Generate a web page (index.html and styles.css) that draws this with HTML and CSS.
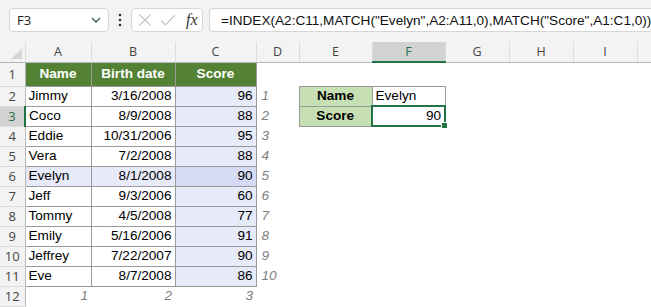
FILE: index.html
```html
<!DOCTYPE html>
<html lang="en">
<head>
    <meta charset="UTF-8">
    <title>INDEX MATCH</title>
    <link rel="stylesheet" href="styles.css">
</head>
<body>
    <!-- Barra de fórmulas -->
    <div class="formula-bar">
        <div class="name-box">
            <span>F3</span>
            <svg width="12" height="8" viewBox="0 0 12 8"><path d="M2 2 L6 6 L10 2" fill="none" stroke="#3b5a3f" stroke-width="1.3"/></svg>
        </div>
        <div class="dots">
            <svg width="4" height="14" viewBox="0 0 4 14"><circle cx="2" cy="2" r="1.3" fill="#333"/><circle cx="2" cy="7" r="1.3" fill="#333"/><circle cx="2" cy="12" r="1.3" fill="#333"/></svg>
        </div>
        <div class="fx-box">
            <svg width="14" height="14" viewBox="0 0 14 14"><path d="M1.5 1.5 L12.5 12.5 M12.5 1.5 L1.5 12.5" stroke="#c4c4c4" stroke-width="1.1" fill="none"/></svg>
            <svg width="16" height="14" viewBox="0 0 16 14"><path d="M1 7.5 L5.5 12 L15 2" stroke="#c4c4c4" stroke-width="1.1" fill="none"/></svg>
            <span class="fx">fx</span>
        </div>
        <div class="formula">=INDEX(A2:C11,MATCH("Evelyn",A2:A11,0),MATCH("Score",A1:C1,0))</div>
    </div>

    <!-- Hoja -->
    <table class="sheet">
        <colgroup>
            <col class="c-rh"><col class="c-a"><col class="c-b"><col class="c-c"><col class="c-d">
            <col class="c-e"><col class="c-f"><col class="c-g"><col class="c-h"><col class="c-i"><col class="c-j">
        </colgroup>
        <tr class="col-heads">
            <th class="corner"><span class="tri"></span></th>
            <th>A</th><th>B</th><th>C</th><th>D</th><th>E</th>
            <th class="sel">F</th><th>G</th><th>H</th><th>I</th><th></th>
        </tr>
        <tr class="first">
            <th class="rh">1</th>
            <td class="t head">Name</td><td class="t head">Birth date</td><td class="t head">Score</td>
            <td></td><td></td><td></td><td></td><td></td><td></td><td></td>
        </tr>
        <tr>
            <th class="rh">2</th>
            <td class="t">Jimmy</td><td class="t num">3/16/2008</td><td class="t num sc">96</td>
            <td class="idx">1</td><td class="lab">Name</td><td class="val">Evelyn</td><td></td><td></td><td></td><td></td>
        </tr>
        <tr>
            <th class="rh rh-sel">3</th>
            <td class="t">Coco</td><td class="t num">8/9/2008</td><td class="t num sc">88</td>
            <td class="idx">2</td><td class="lab">Score</td><td class="val num active">90<span class="handle"></span></td><td></td><td></td><td></td><td></td>
        </tr>
        <tr>
            <th class="rh">4</th>
            <td class="t">Eddie</td><td class="t num">10/31/2006</td><td class="t num sc">95</td>
            <td class="idx">3</td><td></td><td></td><td></td><td></td><td></td><td></td>
        </tr>
        <tr>
            <th class="rh">5</th>
            <td class="t">Vera</td><td class="t num">7/2/2008</td><td class="t num sc">88</td>
            <td class="idx">4</td><td></td><td></td><td></td><td></td><td></td><td></td>
        </tr>
        <tr>
            <th class="rh">6</th>
            <td class="t hl">Evelyn</td><td class="t num hl">8/1/2008</td><td class="t num hit">90</td>
            <td class="idx">5</td><td></td><td></td><td></td><td></td><td></td><td></td>
        </tr>
        <tr>
            <th class="rh">7</th>
            <td class="t">Jeff</td><td class="t num">9/3/2006</td><td class="t num sc">60</td>
            <td class="idx">6</td><td></td><td></td><td></td><td></td><td></td><td></td>
        </tr>
        <tr>
            <th class="rh">8</th>
            <td class="t">Tommy</td><td class="t num">4/5/2008</td><td class="t num sc">77</td>
            <td class="idx">7</td><td></td><td></td><td></td><td></td><td></td><td></td>
        </tr>
        <tr>
            <th class="rh">9</th>
            <td class="t">Emily</td><td class="t num">5/16/2006</td><td class="t num sc">91</td>
            <td class="idx">8</td><td></td><td></td><td></td><td></td><td></td><td></td>
        </tr>
        <tr>
            <th class="rh">10</th>
            <td class="t">Jeffrey</td><td class="t num">7/22/2007</td><td class="t num sc">90</td>
            <td class="idx">9</td><td></td><td></td><td></td><td></td><td></td><td></td>
        </tr>
        <tr>
            <th class="rh">11</th>
            <td class="t">Eve</td><td class="t num">8/7/2008</td><td class="t num sc">86</td>
            <td class="idx">10</td><td></td><td></td><td></td><td></td><td></td><td></td>
        </tr>
        <tr>
            <th class="rh">12</th>
            <td class="num idx">1</td><td class="num idx">2</td><td class="num idx">3</td>
            <td></td><td></td><td></td><td></td><td></td><td></td><td></td>
        </tr>
        <tr class="last">
            <th class="rh"></th>
            <td></td><td></td><td></td><td></td><td></td><td></td><td></td><td></td><td></td><td></td>
        </tr>
    </table>
</body>
</html>
```

FILE: styles.css
```css
body {
    margin: 0;
    background-color: #ffffff;
    font-family: "Liberation Sans", Arial, sans-serif;
    overflow: hidden;
}

/* Barra de fórmulas */
.formula-bar {
    display: flex;
    align-items: center;
    height: 42px;
    box-sizing: border-box;
    padding: 0 0 2px 9px;
    background-color: #f3f3f3;
    overflow: hidden;
}

.name-box, .fx-box, .formula {
    height: 24px;
    box-sizing: border-box;
    background-color: #ffffff;
    border: 1px solid #d6d6d6;
    border-radius: 4px;
    display: flex;
    align-items: center;
}

.name-box {
    width: 100px;
    padding: 0 6px 0 7px;
    justify-content: space-between;
    font-family: "Open Sans", sans-serif;
    font-size: 13px;
    color: #222;
}

.dots {
    width: 22px;
    display: flex;
    justify-content: center;
}

.fx-box {
    width: 72px;
    padding: 0 4px 0 6px;
    gap: 8px;
}

.fx {
    font-family: "Liberation Serif", serif;
    font-style: italic;
    font-size: 16px;
    color: #333;
    margin-left: 2px;
}

.formula {
    margin-left: 6px;
    flex: 1;
    border-right: none;
    border-radius: 4px 0 0 4px;
    padding-left: 11px;
    font-size: 13.6px;
    color: #111;
    white-space: nowrap;
    overflow: hidden;
}

/* Hoja */
.sheet {
    border-collapse: collapse;
    table-layout: fixed;
    width: 651px;
}

.c-rh { width: 25px; }
.c-a { width: 66px; }
.c-b { width: 84px; }
.c-c { width: 81px; }
.c-d { width: 43px; }
.c-e { width: 73px; }
.c-f { width: 73px; }
.c-g, .c-h, .c-i { width: 64px; }
.c-j { width: 14px; }

.col-heads th {
    height: 16px;
    padding: 0;
    background-color: #f3f3f3;
    border-left: 1px solid #dcdcdc;
    border-bottom: 1px solid #b7b7b7;
    font-family: "Open Sans", sans-serif;
    font-weight: normal;
    font-size: 12.5px;
    color: #444;
    line-height: 16px;
}

.col-heads th.corner {
    position: relative;
    border-left: none;
}

.tri {
    position: absolute;
    right: 3px;
    bottom: 3px;
    width: 0;
    height: 0;
    border-left: 11px solid transparent;
    border-bottom: 11px solid #d6d6d6;
}

.col-heads th.sel {
    background-color: #d2d2d2;
    color: #217346;
    border-bottom: 2px solid #217346;
}

tr {
    height: 20px;
}

tr.first {
    height: 24px;
}

tr.last {
    height: 3px;
}

.rh {
    padding: 0;
    background-color: #f3f3f3;
    border-right: 1px solid #b7b7b7;
    border-bottom: 1px solid #dcdcdc;
    font-family: "Open Sans", sans-serif;
    font-weight: normal;
    font-size: 13px;
    line-height: 18px;
    color: #444;
    text-align: center;
}

.rh-sel {
    background-color: #d2d2d2;
    color: #217346;
    border-right: 2px solid #217346;
}

td {
    padding: 0 3px;
    font-size: 13.6px;
    line-height: 18px;
    color: #000;
    white-space: nowrap;
    overflow: hidden;
}

.t {
    border: 1px solid #9a9a9a;
}

.head {
    background-color: #548235;
    color: #ffffff;
    font-weight: bold;
    text-align: center;
}

.num {
    text-align: right;
}

.sc, .hl {
    background-color: #e7eaf9;
}

.hit {
    background-color: #d6dbf5;
}

.idx {
    font-style: italic;
    color: #808080;
    padding-left: 5px;
}

.lab {
    background-color: #c6e0b4;
    border: 1px solid #9a9a9a;
    font-weight: bold;
    text-align: center;
}

.val {
    border: 1px solid #9a9a9a;
}

.active {
    position: relative;
    overflow: visible;
    border: 2px solid #217346;
}

.handle {
    position: absolute;
    right: -4px;
    bottom: -4px;
    width: 5px;
    height: 5px;
    background-color: #217346;
    border: 1px solid #ffffff;
}
```
